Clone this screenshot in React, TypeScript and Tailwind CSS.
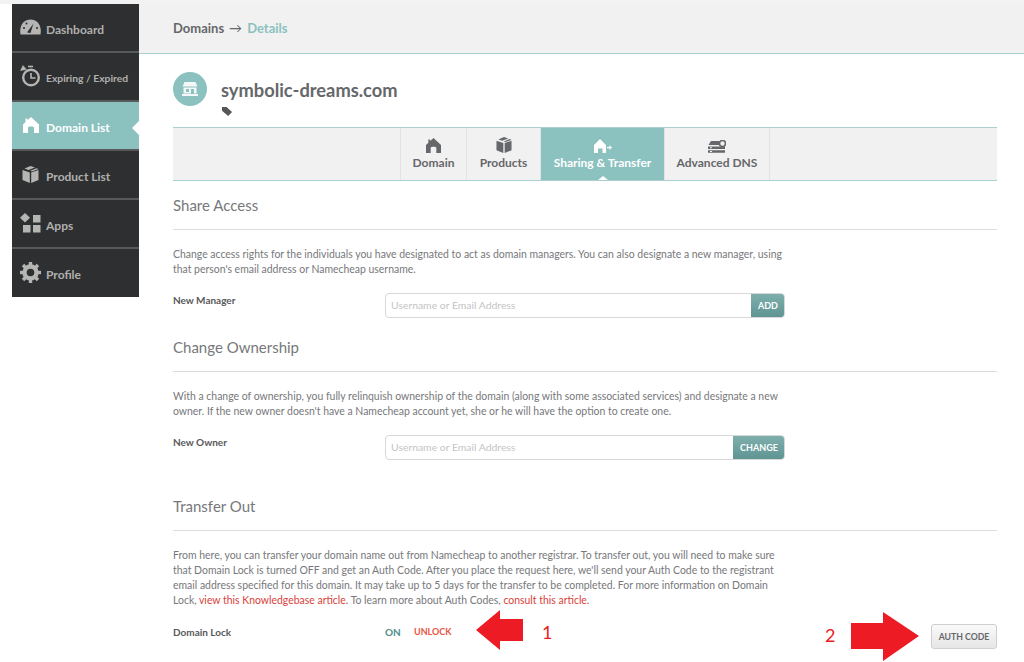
import React from 'react';

const font = { fontFamily: 'Lato, "Open Sans", sans-serif' };

const GaugeIcon = () => (
  <svg width="21" height="16" viewBox="0 0 21 16">
    <path d="M0.5 15.5 C-1 6 4 0.5 10.5 0.5 S22 6 20.5 15.5 Z" fill="#b5b5b3" />
    <path d="M7 13.5 L13.5 4.5 L10.5 14 Z" fill="#2e2f31" />
    <circle cx="4" cy="9" r="1" fill="#2e2f31" />
    <circle cx="6.5" cy="4.5" r="1" fill="#2e2f31" />
    <circle cx="17" cy="9" r="1" fill="#2e2f31" />
  </svg>
);

const TimerIcon = () => (
  <svg width="21" height="22" viewBox="0 0 21 22" fill="none" stroke="#b5b5b3">
    <circle cx="11" cy="12.5" r="7.8" strokeWidth="2.4" />
    <path d="M11 8 V13 H15.5" strokeWidth="1.6" />
    <path d="M0.5 5.5 L3 0.5 L6.5 4.5 Z" fill="#b5b5b3" strokeWidth="0.5" />
    <path d="M8 1.5 H13" strokeWidth="1.6" />
  </svg>
);

const HouseIcon = ({ color, size = 16 }: { color: string; size?: number }) => (
  <svg width={size} height={size} viewBox="0 0 16 16">
    <path
      d="M8 0 L16 7.5 V16 H11 V10.5 C11 9 5 9 5 10.5 V16 H0 V7.5 L2.5 5 V1.5 H4.5 V3.2 Z"
      fill={color}
    />
  </svg>
);

const BoxIcon = ({ color, size = 17 }: { color: string; size?: number }) => (
  <svg width={size} height={size} viewBox="0 0 17 17">
    <path d="M8.5 0 L13 1.6 L6.5 4 L2.5 2.6 Z" fill={color} />
    <path d="M14.5 2.2 L16.5 3 L10 5.4 L8.2 4.7 Z" fill={color} />
    <path d="M0.5 4 L7.8 6.4 V17 L0.5 14 Z" fill={color} />
    <path d="M16.5 4 L9.2 6.4 V17 L16.5 14 Z" fill={color} />
  </svg>
);

const AppsIcon = () => (
  <svg width="21" height="20" viewBox="0 0 21 20" fill="#b5b5b3">
    <path d="M5 0 L10 4.7 L5 9.5 L0 4.7 Z" />
    <rect x="13" y="2" width="7.5" height="7.5" />
    <rect x="3" y="12" width="7.5" height="7.5" />
    <rect x="13" y="12" width="7.5" height="7.5" />
  </svg>
);

const GearIcon = () => (
  <svg width="21" height="21" viewBox="0 0 21 21">
    <circle cx="10.5" cy="10.5" r="6" fill="none" stroke="#b5b5b3" strokeWidth="4.4" />
    <g stroke="#b5b5b3" strokeWidth="3.4">
      <path d="M10.5 0 V4" />
      <path d="M10.5 17 V21" />
      <path d="M0 10.5 H4" />
      <path d="M17 10.5 H21" />
      <path d="M3 3 L6 6" />
      <path d="M15 15 L18 18" />
      <path d="M18 3 L15 6" />
      <path d="M6 15 L3 18" />
    </g>
  </svg>
);

const StoreIcon = () => (
  <svg width="16" height="14" viewBox="0 0 16 14" fill="#f4f8f8">
    <path d="M2.5 0 H13.5 L15.5 4.5 H0.5 Z" />
    <path d="M1.5 5.5 H14.5 V11.5 H1.5 Z M4 7 V10 H7 V7 Z M9 7 V11.5 H12 V7 Z" fillRule="evenodd" />
    <rect x="0" y="12" width="16" height="2" />
  </svg>
);

const TagIcon = () => (
  <svg width="10" height="9" viewBox="0 0 10 9">
    <path d="M0 0 H4.5 L10 5 L6.2 9 L0 3.8 Z" fill="#55565a" />
  </svg>
);

const ShareIcon = () => (
  <svg width="18" height="14" viewBox="0 0 18 14" fill="#ffffff">
    <path d="M6 0 L12 6 V14 H8.5 V9.5 H4 V14 H0 V6 Z" />
    <path d="M13 8 H15.5 V6 L18 8.5 L15.5 11 V9.2 H13 Z" />
  </svg>
);

const ServerIcon = () => (
  <svg width="18" height="13" viewBox="0 0 18 13" fill="#66676a">
    <path d="M3 1 H11 V5 H0.5 Z" />
    <circle cx="14.5" cy="3.5" r="3" fill="none" stroke="#66676a" strokeWidth="1.6" />
    <path d="M0 6.5 H17 V9 H0 Z M2 7.3 V8.2 H4 V7.3 Z" fillRule="evenodd" />
    <path d="M0 10.2 H17 V12.8 H0 Z M2 11 V12 H4 V11 Z" fillRule="evenodd" />
  </svg>
);

const navItems = [
  { label: 'Dashboard', icon: <GaugeIcon />, small: false },
  { label: 'Expiring / Expired', icon: <TimerIcon />, small: true },
  { label: 'Domain List', icon: <HouseIcon color="#ffffff" />, active: true },
  { label: 'Product List', icon: <BoxIcon color="#b5b5b3" /> },
  { label: 'Apps', icon: <AppsIcon /> },
  { label: 'Profile', icon: <GearIcon /> },
];

const tabs = [
  { label: 'Domain', width: 'w-[67px]', icon: <HouseIcon color="#66676a" size={15} /> },
  { label: 'Products', width: 'w-[74px]', icon: <BoxIcon color="#66676a" size={16} /> },
  { label: 'Sharing & Transfer', width: 'w-[124px]', icon: <ShareIcon />, active: true },
  { label: 'Advanced DNS', width: 'w-[105px]', icon: <ServerIcon /> },
];

const Section = ({ title, children }: { title: string; children: React.ReactNode }) => (
  <section>
    <h2 className="text-[15px] leading-[20px] text-[#77787b]">{title}</h2>
    <hr className="mt-[14px] border-t border-[#dcdcdc]" />
    <p className="mt-[17px] text-[10.45px] leading-[15px] whitespace-nowrap text-[#77787b]">{children}</p>
  </section>
);

const InputRow = ({ label, action, buttonWidth }: { label: string; action: string; buttonWidth: string }) => (
  <div className="mt-[16px] flex w-[612px]">
    <div className="w-[212px] text-[10px] leading-[14px] font-bold text-[#58595b]">{label}</div>
    <div className="flex h-[25px] flex-1 overflow-hidden rounded-[4px] border border-[#d8d8d8]">
      <div className="flex-1 pl-[5px] text-[10.4px] leading-[22px] text-[#c4c4c4]">Username or Email Address</div>
      <div
        className={`${buttonWidth} -my-px -mr-px bg-gradient-to-b from-[#7fb0ae] to-[#5e9391] text-center text-[9px] leading-[25px] font-bold text-white`}
      >
        {action}
      </div>
    </div>
  </div>
);

const RedArrow = ({ className, points, w, h }: { className: string; points: string; w: number; h: number }) => (
  <svg className={className} width={w} height={h} viewBox={`0 0 ${w} ${h}`}>
    <polygon points={points} fill="#ed1c24" />
  </svg>
);

export default function App() {
  return (
    <div className="relative h-[662px] w-[1024px] overflow-hidden bg-white" style={font}>
      <div className="h-[4px] bg-[#f2f2f2]" />
      <div className="flex">
        <nav className="ml-[12px] h-[293px] w-[127px] shrink-0 bg-[#2e2f31]">
          {navItems.map((item) => (
            <div
              key={item.label}
              className={`relative flex h-[49px] items-center border-b-2 border-[#58595b] pb-[1px] last:border-b-0 last:pb-[3px] ${
                item.active ? 'bg-[#8bc1bf] text-white' : 'text-[#b0b0ae]'
              }`}
            >
              <div className="flex w-[34px] shrink-0 justify-center pl-[3px]">{item.icon}</div>
              <span className={`mt-[5px] font-bold ${item.small ? 'text-[10.3px]' : 'text-[12px]'}`}>{item.label}</span>
              {item.active && (
                <div className="absolute top-[19px] right-0 h-0 w-0 border-y-[7px] border-r-[7px] border-y-transparent border-r-white" />
              )}
            </div>
          ))}
        </nav>

        <div className="min-w-0 flex-1">
          <header className="flex h-[50px] items-center border-b border-[#a9d0ce] bg-[#f1f1f1] pt-[1px] pl-[34px]">
            <span className="text-[13px] font-bold text-[#66676a]">Domains</span>
            <span className="mx-[5px] text-[13px] text-[#66676a]">→</span>
            <span className="text-[13px] font-bold text-[#8bc1bf]">Details</span>
          </header>

          <main className="ml-[34px] w-[824px]">
            <div className="mt-[18px] flex h-[55px] items-start">
              <div className="flex h-[34px] w-[34px] items-center justify-center rounded-full bg-[#8bc1bf]">
                <StoreIcon />
              </div>
              <div className="ml-[14px]">
                <h1 className="mt-[7px] text-[18.3px] leading-[22px] font-bold text-[#66676a]">symbolic-dreams.com</h1>
                <div className="mt-[6px] ml-[1px]">
                  <TagIcon />
                </div>
              </div>
            </div>

            <div className="flex h-[54px] border-y border-[#a9d0ce] bg-[#f1f1f1] pl-[227px]">
              {tabs.map((tab) => (
                <div
                  key={tab.label}
                  className={`relative flex ${tab.width} flex-col items-center border-r border-[#e2e2e2] ${
                    tab.active ? 'bg-[#8bc1bf] text-white' : 'text-[#66676a]'
                  } ${tab.label === 'Domain' ? 'border-l' : ''}`}
                >
                  <div className="flex h-[25px] items-end">{tab.icon}</div>
                  <span className="mt-[2px] text-[12px] leading-[15px] font-bold">{tab.label}</span>
                  {tab.active && (
                    <div className="absolute bottom-0 left-[57px] h-0 w-0 border-x-[5px] border-b-[4px] border-x-transparent border-b-white" />
                  )}
                </div>
              ))}
            </div>

            <div className="mt-[14px]">
              <Section title="Share Access">
                Change access rights for the individuals you have designated to act as domain managers. You can also
                designate a new manager, using
                <br />
                that person's email address or Namecheap username.
              </Section>
              <InputRow label="New Manager" action="ADD" buttonWidth="w-[34px]" />
            </div>

            <div className="mt-[19px]">
              <Section title="Change Ownership">
                With a change of ownership, you fully relinquish ownership of the domain (along with some associated
                services) and designate a new
                <br />
                owner. If the new owner doesn't have a Namecheap account yet, she or he will have the option to create
                one.
              </Section>
              <InputRow label="New Owner" action="CHANGE" buttonWidth="w-[52px]" />
            </div>

            <div className="mt-[36px]">
              <Section title="Transfer Out">
                From here, you can transfer your domain name out from Namecheap to another registrar. To transfer out,
                you will need to make sure
                <br />
                that Domain Lock is turned OFF and get an Auth Code. After you place the request here, we'll send your
                Auth Code to the registrant
                <br />
                email address specified for this domain. It may take up to 5 days for the transfer to be completed. For
                more information on Domain
                <br />
                Lock, <span className="text-[#d9423a]">view this Knowledgebase article.</span> To learn more about Auth
                Codes, <span className="text-[#d9423a]">consult this article.</span>
              </Section>
              <div className="mt-[16px] flex items-start">
                <div className="w-[212px] pt-[1px] text-[10px] leading-[14px] font-bold text-[#58595b]">Domain Lock</div>
                <span className="w-[29px] pt-[1px] text-[10px] leading-[14px] font-bold text-[#4d8f8d]">ON</span>
                <span className="pt-[1px] text-[9px] leading-[14px] font-bold text-[#e8553f]">UNLOCK</span>
                <div className="ml-auto h-[25px] w-[66px] rounded-[3px] border border-[#cfcfcf] bg-gradient-to-b from-[#fafafa] to-[#e6e6e6] text-center text-[8.7px] leading-[23px] font-bold text-[#66676a]">
                  AUTH CODE
                </div>
              </div>
            </div>
          </main>
        </div>
      </div>

      <RedArrow
        className="absolute top-[610px] left-[476px]"
        w={47}
        h={40}
        points="0,20 24,0 24,9 47,9 47,31 24,31 24,40"
      />
      <span className="absolute top-[620px] left-[542px] text-[18px] leading-[24px] text-[#ed1c24]">1</span>
      <span className="absolute top-[623px] left-[825px] text-[18px] leading-[24px] text-[#ed1c24]">2</span>
      <RedArrow
        className="absolute top-[612px] left-[851px]"
        w={68}
        h={49}
        points="0,11 32,11 32,0 68,24 32,49 32,37 0,37"
      />
    </div>
  );
}
